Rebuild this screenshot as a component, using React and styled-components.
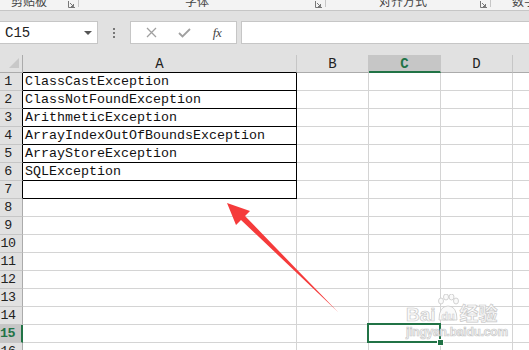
import React from 'react'
import styled, { createGlobalStyle, css } from 'styled-components'

const GREEN = '#217346'
const GRID = '#d4d4d4'

const GlobalStyle = createGlobalStyle`
  html, body {
    margin: 0;
    padding: 0;
    width: 529px;
    height: 350px;
    overflow: hidden;
    background: #e1e1e1;
    font-family: "Liberation Mono", "Noto Sans CJK SC", monospace;
  }
`

const Page = styled.div`
  position: relative;
  width: 529px;
  height: 350px;
  overflow: hidden;
  display: flex;
  flex-direction: column;
`

const RibbonLabels = styled.div`
  flex: none;
  height: 10px;
  background: #f3f3f3;
  border-bottom: 1px solid #c6c6c6;
  display: flex;
  overflow: hidden;
`

const Group = styled.div`
  width: ${p => p.$w}px;
  flex: none;
  display: flex;
  align-items: flex-start;
  border-right: 1px solid #c6c6c6;
  height: 7px;
  box-sizing: border-box;
  ${p => p.$last && css`border-right: none; flex: 1;`}
`

const GroupLabel = styled.span`
  flex: 1;
  text-align: ${p => (p.$left ? 'left' : 'center')};
  padding-left: ${p => p.$pad || 0}px;
  font-family: "Noto Sans CJK SC", sans-serif;
  font-size: 12px;
  line-height: 12px;
  margin-top: -5px;
  color: #444;
  white-space: nowrap;
`

const Launcher = styled.svg`
  width: 7px;
  height: 7px;
  margin: 1px 3px 0 0;
  flex: none;
`

const FormulaBar = styled.div`
  flex: none;
  display: flex;
  align-items: center;
  height: 23px;
  margin-top: 10px;
`

const NameBox = styled.div`
  width: 99px;
  height: 23px;
  margin-left: -1px;
  box-sizing: border-box;
  background: #fff;
  border: 1px solid #c6c6c6;
  display: flex;
  align-items: center;
  justify-content: space-between;
  padding: 0 5px 0 5px;
  font-size: 14px;
  color: #222;
`

const Caret = styled.span`
  width: 0;
  height: 0;
  border-left: 4px solid transparent;
  border-right: 4px solid transparent;
  border-top: 4px solid #555;
`

const Dots = styled.div`
  width: 32px;
  display: flex;
  flex-direction: column;
  align-items: center;
  gap: 2px;
  span {
    width: 2px;
    height: 2px;
    background: #777;
  }
`

const FxBox = styled.div`
  width: 107px;
  height: 23px;
  box-sizing: border-box;
  background: #fff;
  border: 1px solid #c6c6c6;
  display: flex;
  align-items: center;
  justify-content: space-around;
  padding: 0 4px;
`

const FxText = styled.span`
  font-family: "Liberation Serif", serif;
  font-style: italic;
  font-size: 13px;
  color: #444;
  letter-spacing: -0.5px;
`

const FormulaInput = styled.div`
  flex: 1;
  height: 23px;
  margin: 0 -1px 0 4px;
  box-sizing: border-box;
  background: #fff;
  border: 1px solid #c6c6c6;
`

const Sheet = styled.div`
  margin-top: 11px;
  flex: none;
  display: grid;
  grid-template-columns: 23px 274px 72px 72px 72px 72px;
  grid-auto-rows: 18px;
  background: #fff;
`

const Corner = styled.div`
  background: #e1e1e1;
  border-right: 1px solid #ababab;
  border-bottom: 1px solid #ababab;
  box-sizing: border-box;
  position: relative;
  svg { position: absolute; right: 3px; bottom: 4px; }
`

const ColHeader = styled.div`
  background: ${p => (p.$active ? '#c6c6c6' : '#e1e1e1')};
  border-right: 1px solid #c6c6c6;
  border-bottom: ${p => (p.$active ? `2px solid ${GREEN}` : p.$boxed ? '1px solid #000' : '1px solid #ababab')};
  box-sizing: border-box;
  text-align: center;
  font-size: 14px;
  line-height: 18px;
  color: ${p => (p.$active ? GREEN : '#222')};
  font-weight: ${p => (p.$active ? 'bold' : 'normal')};
`

const RowHeader = styled.div`
  background: ${p => (p.$active ? '#c6c6c6' : '#e1e1e1')};
  border-right: ${p => (p.$active ? `2px solid ${GREEN}` : p.$boxed ? '1px solid #000' : '1px solid #ababab')};
  border-bottom: 1px solid #c6c6c6;
  box-sizing: border-box;
  width: 23px;
  padding-right: 6px;
  text-align: center;
  font-size: 13.33px;
  line-height: 18px;
  letter-spacing: -0.5px;
  color: ${p => (p.$active ? GREEN : '#222')};
  font-weight: ${p => (p.$active ? 'bold' : 'normal')};
  white-space: nowrap;
`

const Cell = styled.div`
  border-right: 1px solid ${p => (p.$boxed ? '#000' : GRID)};
  border-bottom: 1px solid ${p => (p.$boxed ? '#000' : GRID)};
  box-sizing: border-box;
  padding-left: 2px;
  font-size: 13.33px;
  line-height: 18px;
  color: #111;
  white-space: nowrap;
  overflow: visible;
  position: relative;
  ${p => p.$selected && css`
    z-index: 2;
    &::after {
      content: '';
      position: absolute;
      top: -2px;
      left: -2px;
      right: -1px;
      bottom: -1px;
      border: 2px solid ${GREEN};
    }
    &::before {
      content: '';
      position: absolute;
      right: -4px;
      bottom: -4px;
      width: 5px;
      height: 5px;
      background: ${GREEN};
      border: 1px solid #fff;
      z-index: 3;
    }
  `}
`

const Overlay = styled.svg`
  position: absolute;
  left: 0;
  top: 0;
  pointer-events: none;
  z-index: 5;
`

const Watermark = styled.div`
  position: absolute;
  left: 406px;
  top: 292px;
  z-index: 6;
  font-family: "Liberation Sans", "Noto Sans CJK SC", sans-serif;
  font-weight: bold;
  color: #fafafa;
  -webkit-text-stroke: 0.7px #c8c8c8;
  display: flex;
  flex-direction: column;
`

const WmTop = styled.div`
  display: flex;
  align-items: flex-end;
  font-size: 19px;
  line-height: 18px;
  height: 32px;
`

const WmSub = styled.div`
  font-size: 12px;
  line-height: 12px;
  margin-top: 2px;
  letter-spacing: -0.2px;
`

const data = [
  'ClassCastException',
  'ClassNotFoundException',
  'ArithmeticException',
  'ArrayIndexOutOfBoundsException',
  'ArrayStoreException',
  'SQLException',
  '',
]

const cols = ['A', 'B', 'C', 'D', 'E']

function LauncherIcon() {
  return (
    <Launcher viewBox="0 0 7 7">
      <path d="M0.5 0 V6.5 H7" stroke="#777" fill="none" />
      <path d="M2 2 L5.5 5.5 M5.5 3 V5.5 H3" stroke="#777" fill="none" />
    </Launcher>
  )
}

export default function App() {
  const rows = []
  for (let r = 1; r <= 16; r++) {
    const boxed = r <= 7
    rows.push(
      <React.Fragment key={r}>
        <RowHeader $boxed={boxed} $active={r === 15}>{r}</RowHeader>
        <Cell $boxed={boxed}>{data[r - 1] || ''}</Cell>
        <Cell />
        <Cell $selected={r === 15} />
        <Cell />
        <Cell />
      </React.Fragment>
    )
  }

  return (
    <Page>
      <GlobalStyle />
      <RibbonLabels>
        <Group $w={79}>
          <GroupLabel $left $pad={11}>剪贴板</GroupLabel>
          <LauncherIcon />
        </Group>
        <Group $w={247}>
          <GroupLabel>字体</GroupLabel>
          <LauncherIcon />
        </Group>
        <Group $w={165}>
          <GroupLabel>对齐方式</GroupLabel>
          <LauncherIcon />
        </Group>
        <Group $last>
          <GroupLabel $left $pad={21}>数字</GroupLabel>
        </Group>
      </RibbonLabels>

      <FormulaBar>
        <NameBox>
          C15
          <Caret />
        </NameBox>
        <Dots><span /><span /><span /></Dots>
        <FxBox>
          <svg width="11" height="11" viewBox="0 0 11 11">
            <path d="M1 1 L10 10 M10 1 L1 10" stroke="#a0a0a0" strokeWidth="1.3" />
          </svg>
          <svg width="13" height="11" viewBox="0 0 13 11">
            <path d="M1 6 L4.5 9.5 L12 2" stroke="#a0a0a0" strokeWidth="1.8" fill="none" />
          </svg>
          <FxText>fx</FxText>
        </FxBox>
        <FormulaInput />
      </FormulaBar>

      <Sheet>
        <Corner>
          <svg width="10" height="10" viewBox="0 0 10 10">
            <polygon points="10,0 10,10 0,10" fill="#c8c8c8" />
          </svg>
        </Corner>
        {cols.map(c => (
          <ColHeader key={c} $boxed={c === 'A'} $active={c === 'C'}>{c}</ColHeader>
        ))}
        {rows}
      </Sheet>

      <Overlay width="529" height="350" viewBox="0 0 529 350">
        <polygon
          points="227,203 250,211 245,216 338,312 241,220 236,225"
          fill="#f53b3b"
        />
      </Overlay>

      <Watermark>
        <WmTop>
          <span>Bai</span>
          <svg width="22" height="30" viewBox="0 0 22 30" style={{ margin: '0 1px' }}>
            <g fill="#fafafa" stroke="#c8c8c8" strokeWidth="0.8">
              <ellipse cx="4" cy="7" rx="2.5" ry="3" />
              <ellipse cx="9" cy="3" rx="2.5" ry="3" />
              <ellipse cx="14.5" cy="3" rx="2.5" ry="3" />
              <ellipse cx="19" cy="7" rx="2.5" ry="3" />
              <path d="M2 26 Q2 12 11 12 Q20 12 20 26 Z" />
            </g>
            <text x="11" y="26" textAnchor="middle" fontSize="11" fontWeight="bold" fill="#fafafa" stroke="#c8c8c8" strokeWidth="0.5" fontFamily="Liberation Sans, sans-serif">du</text>
          </svg>
          <span>经验</span>
        </WmTop>
        <WmSub>jingyan.baidu.com</WmSub>
      </Watermark>
    </Page>
  )
}
